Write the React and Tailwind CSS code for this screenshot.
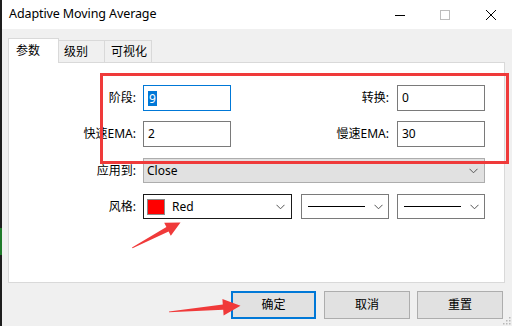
import React from "react";

function Chevron() {
  return (
    <svg width="9" height="6" viewBox="0 0 9 6" className="shrink-0">
      <path d="M0.5 0.8 L4.5 4.8 L8.5 0.8" fill="none" stroke="#555" strokeWidth="1" />
    </svg>
  );
}

function TextBox({ children, focused }) {
  return (
    <div
      className={`w-[88px] h-[26px] bg-white flex items-center pl-[4px] text-[12px] ${
        focused ? "border border-[#0078d7]" : "border border-[#7a7a7a]"
      }`}
    >
      {children}
    </div>
  );
}

export default function App() {
  return (
    <div className="relative w-[512px] h-[326px] overflow-hidden flex bg-[#f0f0f0] text-black font-['Noto_Sans','Noto_Sans_CJK_SC',sans-serif]">
      {/* left background strip */}
      <div className="w-[2px] h-full bg-[#1e1e1e] flex flex-col">
        <div className="h-[228px]" />
        <div className="h-[27px] bg-[#1f7a2a]" />
      </div>

      {/* dialog */}
      <div className="flex-1 flex flex-col">
        {/* title bar */}
        <div className="h-[29px] bg-white flex items-center">
          <div className="pl-[7px] text-[12.5px] leading-none tracking-[-0.1px]">Adaptive Moving Average</div>
          <div className="flex-1" />
          <div className="flex items-center">
            <svg width="12" height="12" viewBox="0 0 12 12" className="mr-[33px]">
              <path d="M1 6.5 H11" stroke="#000" strokeWidth="1" />
            </svg>
            <svg width="12" height="12" viewBox="0 0 12 12" className="mr-[34px]">
              <rect x="1.5" y="1.5" width="9" height="9" fill="none" stroke="#bdbdbd" strokeWidth="1" />
            </svg>
            <svg width="12" height="12" viewBox="0 0 12 12" className="mr-[15px]">
              <path d="M1 1 L11 11 M11 1 L1 11" stroke="#000" strokeWidth="1" />
            </svg>
          </div>
        </div>

        {/* body */}
        <div className="flex-1 flex flex-col pt-[9px] pl-[6px]">
          {/* tabs */}
          <div className="flex items-end h-[24px] text-[12px]">
            <div className="relative z-10 -mb-px h-[25px] w-[51px] bg-white border border-b-0 border-[#d9d9d9] pl-[7px] flex items-center">
              参数
            </div>
            <div className="-ml-px h-[22px] w-[47px] border border-b-0 border-[#d9d9d9] pl-[5px] flex items-center">
              级别
            </div>
            <div className="-ml-px h-[22px] w-[48px] border border-b-0 border-[#d9d9d9] pl-[6px] flex items-center">
              可视化
            </div>
          </div>

          {/* panel */}
          <div className="w-[497px] h-[221px] bg-white border border-[#d9d9d9] pt-[22px] text-[12px]">
            <div className="flex items-center">
              <div className="w-[127px] text-right">阶段:</div>
              <div className="ml-[7px]">
                <TextBox focused>
                  <span className="bg-[#0078d7] text-white leading-[15px] px-px">9</span>
                </TextBox>
              </div>
              <div className="w-[158px] text-right">转换:</div>
              <div className="ml-[8px]">
                <TextBox>0</TextBox>
              </div>
            </div>

            <div className="flex items-center mt-[10px]">
              <div className="w-[127px] text-right">快速EMA:</div>
              <div className="ml-[7px]">
                <TextBox>2</TextBox>
              </div>
              <div className="w-[158px] text-right">慢速EMA:</div>
              <div className="ml-[8px]">
                <TextBox>30</TextBox>
              </div>
            </div>

            <div className="flex items-center mt-[11px]">
              <div className="w-[127px] text-right">应用到:</div>
              <div className="ml-[7px] w-[342px] h-[25px] bg-[#e1e1e1] border border-[#adadad] flex items-center pl-[3px] pr-[6px]">
                <span className="flex-1">Close</span>
                <Chevron />
              </div>
            </div>

            <div className="flex items-center mt-[11px]">
              <div className="w-[127px] text-right">风格:</div>
              <div className="ml-[7px] w-[149px] h-[25px] bg-white border border-[#1a1a1a] flex items-center pl-[3px] pr-[6px]">
                <span className="w-[18px] h-[16px] bg-[#ff0000] border border-[#8a8a8a]" />
                <span className="ml-[7px] flex-1">Red</span>
                <Chevron />
              </div>
              <div className="ml-[9px] w-[88px] h-[25px] bg-white border border-[#7a7a7a] flex items-center pl-[6px] pr-[5px]">
                <span className="w-[57px] h-px bg-black" />
                <span className="flex-1" />
                <Chevron />
              </div>
              <div className="ml-[8px] w-[88px] h-[25px] bg-white border border-[#7a7a7a] flex items-center pl-[6px] pr-[5px]">
                <span className="w-[57px] h-px bg-black" />
                <span className="flex-1" />
                <Chevron />
              </div>
            </div>
          </div>

          {/* buttons */}
          <div className="flex justify-end pr-[9px] mt-[8px] text-[12px]">
            <div className="w-[85px] h-[28px] bg-[#e1e1e1] border-2 border-[#0078d7] flex items-center justify-center">
              确定
            </div>
            <div className="ml-[8px] w-[86px] h-[28px] bg-[#e1e1e1] border border-[#adadad] flex items-center justify-center">
              取消
            </div>
            <div className="ml-[7px] w-[86px] h-[28px] bg-[#e1e1e1] border border-[#adadad] flex items-center justify-center">
              重置
            </div>
          </div>
        </div>
      </div>

      {/* resize grip */}
      <svg width="8" height="8" viewBox="0 0 8 8" className="absolute right-[1px] bottom-[1px]">
        <rect x="6" y="0" width="1.5" height="1.5" fill="#b8b8b8" />
        <rect x="3" y="3" width="1.5" height="1.5" fill="#b8b8b8" />
        <rect x="6" y="3" width="1.5" height="1.5" fill="#b8b8b8" />
        <rect x="0" y="6" width="1.5" height="1.5" fill="#b8b8b8" />
        <rect x="3" y="6" width="1.5" height="1.5" fill="#b8b8b8" />
        <rect x="6" y="6" width="1.5" height="1.5" fill="#b8b8b8" />
      </svg>

      {/* annotation: red rectangle */}
      <div className="absolute left-[100px] top-[73px] w-[409px] h-[91px] border-[3px] border-[#ef3a3a]" />

      {/* annotation: arrows */}
      <svg width="512" height="326" viewBox="0 0 512 326" className="absolute left-0 top-0 pointer-events-none">
        <polygon
          points="132,247.5 166.4,227.1 164.2,222.8 180.5,222.5 170.8,235.8 168.6,231.5 132.5,248.2"
          fill="#f03a3a"
        />
        <polygon
          points="169,311.5 222.8,304.5 222.4,299 240.5,305.8 223.6,315.5 223.2,309.8 169,312.3"
          fill="#f03a3a"
        />
      </svg>
    </div>
  );
}
